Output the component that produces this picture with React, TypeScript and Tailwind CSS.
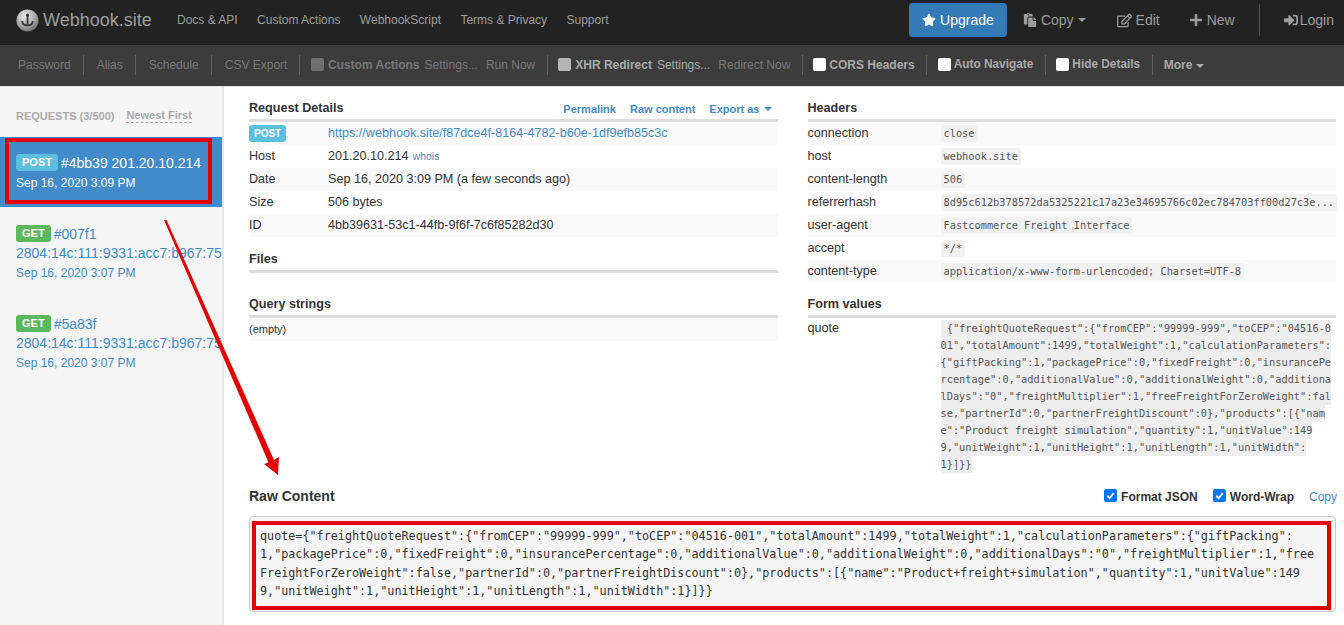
import React from 'react';
import { FaStar, FaPaste, FaRegEdit, FaPlus, FaSignInAlt } from 'react-icons/fa';

const sans = { fontFamily: '"Liberation Sans", Arial, sans-serif' };

const navLinks = ['Docs & API', 'Custom Actions', 'WebhookScript', 'Terms & Privacy', 'Support'];

const details = [
  { label: 'Host', value: '201.20.10.214', whois: true },
  { label: 'Date', value: 'Sep 16, 2020 3:09 PM (a few seconds ago)' },
  { label: 'Size', value: '506 bytes' },
  { label: 'ID', value: '4bb39631-53c1-44fb-9f6f-7c6f85282d30' },
];

const headers = [
  ['connection', 'close'],
  ['host', 'webhook.site'],
  ['content-length', '506'],
  ['referrerhash', '8d95c612b378572da5325221c17a23e34695766c02ec784703ff00d27c3e...'],
  ['user-agent', 'Fastcommerce Freight Interface'],
  ['accept', '*/*'],
  ['content-type', 'application/x-www-form-urlencoded; Charset=UTF-8'],
];

const formLines = [
  ' {"freightQuoteRequest":{"fromCEP":"99999-999","toCEP":"04516-0',
  '01","totalAmount":1499,"totalWeight":1,"calculationParameters":',
  '{"giftPacking":1,"packagePrice":0,"fixedFreight":0,"insurancePe',
  'rcentage":0,"additionalValue":0,"additionalWeight":0,"additiona',
  'lDays":"0","freightMultiplier":1,"freeFreightForZeroWeight":fal',
  'se,"partnerId":0,"partnerFreightDiscount":0},"products":[{"nam',
  'e":"Product freight simulation","quantity":1,"unitValue":149',
  '9,"unitWeight":1,"unitHeight":1,"unitLength":1,"unitWidth":',
  '1}]}}',
];

const rawLines = [
  'quote={"freightQuoteRequest":{"fromCEP":"99999-999","toCEP":"04516-001","totalAmount":1499,"totalWeight":1,"calculationParameters":{"giftPacking":',
  '1,"packagePrice":0,"fixedFreight":0,"insurancePercentage":0,"additionalValue":0,"additionalWeight":0,"additionalDays":"0","freightMultiplier":1,"free',
  'FreightForZeroWeight":false,"partnerId":0,"partnerFreightDiscount":0},"products":[{"name":"Product+freight+simulation","quantity":1,"unitValue":149',
  '9,"unitWeight":1,"unitHeight":1,"unitLength":1,"unitWidth":1}]}}',
];

const mono = "font-['DejaVu_Sans_Mono',monospace]";

function Caret() {
  return <span className="inline-block border-x-[4px] border-t-[4px] border-x-transparent border-t-current align-middle" />;
}

function Logo() {
  return (
    <svg width="23" height="23" viewBox="0 0 24 24" className="mr-[4px]">
      <defs>
        <radialGradient id="ball" cx="40%" cy="30%" r="75%">
          <stop offset="0%" stopColor="#ececec" />
          <stop offset="60%" stopColor="#a8a8a8" />
          <stop offset="100%" stopColor="#6a6a6a" />
        </radialGradient>
      </defs>
      <circle cx="12" cy="12" r="11.5" fill="url(#ball)" />
      <path d="M12 6v11M6.5 12.5c0 3.5 2.5 4.5 5.5 4.5s5.5-1 5.5-4.5" fill="none" stroke="#3a3a3a" strokeWidth="1.9" />
      <circle cx="12" cy="6.5" r="1.7" fill="#3a3a3a" />
    </svg>
  );
}

function Check({ disabled, bright }: { disabled?: boolean; bright?: boolean }) {
  return (
    <span
      className={`mb-[2px] inline-block size-[13px] rounded-[2px] ${
        disabled ? 'mr-1 bg-[#6e6e6e]' : bright ? 'mr-[3px] bg-white' : 'mr-1 bg-[#b5b5b5]'
      }`}
    />
  );
}

function BlueCheck() {
  return (
    <span className="mr-1 mb-[3px] flex size-[13px] items-center justify-center rounded-[2px] bg-[#0075ff]">
      <svg width="11" height="11" viewBox="0 0 12 12">
        <path d="M2.5 6.2l2.5 2.6 4.6-5.4" fill="none" stroke="#fff" strokeWidth="2" />
      </svg>
    </span>
  );
}

function SubItem({ first, plain, children }: { first?: boolean; plain?: boolean; children: React.ReactNode }) {
  return (
    <div
      className={`flex h-5 items-center ${plain ? 'pr-[12px] pl-[13px]' : 'pr-[11.5px] pl-[10.5px]'} ${
        first ? '' : 'border-l border-[#5e5e5e]'
      }`}
    >
      {children}
    </div>
  );
}

function SectionTitle({ children, right }: { children: React.ReactNode; right?: React.ReactNode }) {
  return (
    <div className="flex h-[25px] items-start justify-between border-b-[3px] border-[#dddddd] pt-[3px]">
      <h3 className="text-[12.6px] leading-[17px] font-bold text-[#333]">{children}</h3>
      {right}
    </div>
  );
}

function RequestItem({ id, time }: { id: string; time: string }) {
  return (
    <div className="h-[90px] w-[222px] overflow-hidden pt-[17px] pl-4 text-[#428bca]">
      <div className="flex h-[19px] items-center text-sm">
        <span className="mr-[3px] rounded-[3px] bg-[#5cb85c] px-[6px] py-[2px] text-[11px] leading-[13px] font-bold text-white">GET</span>
        {id}
      </div>
      <div className="text-sm leading-[20px] whitespace-nowrap">2804:14c:111:9331:acc7:b967:75c4:9f2e</div>
      <div className="text-xs leading-[20px]">{time}</div>
    </div>
  );
}

export default function App() {
  return (
    <div className="relative h-[625px] w-[1344px] overflow-hidden bg-white text-[#333]" style={sans}>
      <nav className="flex h-[45px] items-center bg-[#222] pb-[5px] text-xs text-[#9d9d9d]">
        <div className="ml-[16px] flex w-[161px] items-center text-[18px]">
          <Logo />
          Webhook.site
        </div>
        <div className="flex gap-[19.4px]">
          {navLinks.map((link) => (
            <span key={link}>{link}</span>
          ))}
        </div>
        <div className="ml-auto flex items-center pr-[10px] text-sm">
          <button className="mr-[16px] flex h-[34px] w-[98px] items-center justify-center gap-[4px] rounded bg-[#337ab7] text-white">
            <FaStar size={14} />
            Upgrade
          </button>
          <span className="mr-[31px] flex items-center gap-[4px]">
            <FaPaste size={14} />
            Copy
            <Caret />
          </span>
          <span className="mr-[29px] flex items-center gap-[4px]">
            <FaRegEdit size={15} />
            Edit
          </span>
          <span className="flex items-center gap-[4px]">
            <FaPlus size={14} />
            New
          </span>
          <span className="mx-[24px] h-[32px] w-px bg-[#555]" />
          <span className="flex items-center gap-[2px]">
            <FaSignInAlt size={14} />
            Login
          </span>
        </div>
      </nav>

      <div className="flex h-[42px] items-center border-b-[1px] border-[#e7e7e7] bg-[#3c3c3c] pb-[1px] pl-[5px] text-xs text-[#777]">
        <SubItem first plain>Password</SubItem>
        <SubItem plain>Alias</SubItem>
        <SubItem plain>Schedule</SubItem>
        <SubItem plain>CSV Export</SubItem>
        <SubItem>
          <Check disabled />
          <b className="mr-[5px]">Custom Actions</b>
          <span className="mr-2">Settings...</span>
          Run Now
        </SubItem>
        <SubItem>
          <Check />
          <b className="mr-[5px] text-[#aaa]">XHR Redirect</b>
          <span className="mr-2 text-[#aaa]">Settings...</span>
          Redirect Now
        </SubItem>
        <SubItem>
          <Check bright />
          <b className="text-[#aaa]">CORS Headers</b>
        </SubItem>
        <SubItem>
          <Check bright />
          <b className="text-[11.85px] text-[#aaa]">Auto Navigate</b>
        </SubItem>
        <SubItem>
          <Check bright />
          <b className="text-[11.85px] text-[#aaa]">Hide Details</b>
        </SubItem>
        <SubItem plain>
          <b className="-ml-[2px] text-[#aaa]">More</b>
          <span className="ml-1 text-[#aaa]">
            <Caret />
          </span>
        </SubItem>
      </div>

      <div className="flex">
        <aside className="h-[538px] w-[224px] shrink-0 border-r-2 border-[#e7e7e7] bg-[#f5f5f5]">
          <div className="flex h-[50px] items-center pt-[8px] pl-4 text-[11px] font-bold text-[#aaa]">
            <span className="mr-3">REQUESTS (3/500)</span>
            <span className="border-b border-dashed border-[#aaa] text-[11px] leading-[13px]">Newest First</span>
          </div>
          <div className="h-[70px] w-[222px] bg-[#428bca] pt-[16px] pl-4 text-white">
            <div className="flex h-[19px] items-center text-sm">
              <span className="mr-[3px] rounded-[3px] bg-[#5bc0de] px-[6px] py-[2px] text-[11px] leading-[13px] font-bold">POST</span>
              #4bb39 201.20.10.214
            </div>
            <div className="mt-[1px] text-xs leading-[20px]">Sep 16, 2020 3:09 PM</div>
          </div>
          <RequestItem id="#007f1" time="Sep 16, 2020 3:07 PM" />
          <RequestItem id="#5a83f" time="Sep 16, 2020 3:07 PM" />
        </aside>

        <main className="min-w-0 flex-1 pt-[10px] pr-[8px] pl-[25px] text-[12.6px]">
          <div className="grid h-[389px] grid-cols-2 gap-[30px]">
            <section>
              <SectionTitle
                right={
                  <div className="flex gap-[14px] pt-[1px] text-[11px] font-bold text-[#428bca]">
                    <span>Permalink</span>
                    <span>Raw content</span>
                    <span className="mr-[6px] flex items-center gap-1">
                      Export as
                      <Caret />
                    </span>
                  </div>
                }
              >
                Request Details
              </SectionTitle>
              <div className="flex h-[23px] items-center bg-[#f9f9f9]">
                <span className="w-[79px]">
                  <span className="rounded-[3px] bg-[#5bc0de] px-[5px] py-[3px] text-[10px] font-bold text-white">POST</span>
                </span>
                <span className="text-[#428bca]">https://webhook.site/f87dce4f-8164-4782-b60e-1df9efb85c3c</span>
              </div>
              {details.map((row, i) => (
                <div key={row.label} className={`flex h-[23px] items-center pb-[1px] ${i % 2 === 1 ? 'bg-[#f9f9f9]' : ''}`}>
                  <span className="w-[79px]">{row.label}</span>
                  <span>
                    {row.value}
                    {row.whois && <span className="ml-1 text-[10.5px] text-[#428bca]">whois</span>}
                  </span>
                </div>
              ))}

              <div className="mt-[11px]">
                <SectionTitle>Files</SectionTitle>
              </div>
              <div className="mt-[20px]">
                <SectionTitle>Query strings</SectionTitle>
              </div>
              <div className="flex h-[23px] items-center bg-[#f9f9f9] text-[11px]">(empty)</div>
            </section>

            <section>
              <SectionTitle>Headers</SectionTitle>
              {headers.map(([name, value], i) => (
                <div key={name} className={`flex h-[23px] items-center ${i % 2 === 0 ? 'bg-[#f9f9f9]' : ''}`}>
                  <span className="w-[133px] shrink-0 pb-[1px]">{name}</span>
                  <code className={`${mono} rounded-[3px] bg-[#f1f1f1] px-[3px] py-[2px] text-[10.3px] leading-[13px] whitespace-pre text-[#555]`}>
                    {value}
                  </code>
                </div>
              ))}

              <div className="mt-[10px]">
                <SectionTitle>Form values</SectionTitle>
              </div>
              <div className="flex pt-[2px]">
                <span className="w-[133px] shrink-0 leading-[17px]">quote</span>
                <code className={`${mono} text-[10.3px] leading-[17px] text-[#555]`}>
                  {formLines.map((line) => (
                    <div key={line} className="w-fit bg-[#eeeeee] whitespace-pre">
                      {line}
                    </div>
                  ))}
                </code>
              </div>
            </section>
          </div>

          <div className="flex h-[30px] items-start justify-between">
            <h3 className="text-sm leading-[20px] font-bold">Raw Content</h3>
            <div className="-mr-px flex items-center pt-[3px] text-xs font-bold">
              <BlueCheck />
              <span className="mr-[15px]">Format JSON</span>
              <BlueCheck />
              <span className="mr-[15px]">Word-Wrap</span>
              <span className="font-normal text-[#428bca]">Copy</span>
            </div>
          </div>
          <div className="h-[96px] rounded border border-[#cccccc] bg-[#f5f5f5] px-[10px] pt-[10px]">
            <pre className={`${mono} text-[11.75px] leading-[18.3px] text-[#333]`}>{rawLines.join('\n')}</pre>
          </div>
        </main>
      </div>

      {/* red annotations drawn over the screenshot */}
      <div className="pointer-events-none absolute top-[138px] left-[5px] h-[66px] w-[207px] border-[4px] border-[#e30000]" />
      <div className="pointer-events-none absolute top-[521px] left-[252px] h-[89px] w-[1079px] border-[4px] border-[#e30000]" />
      <svg className="pointer-events-none absolute top-0 left-0" width="1344" height="625">
        <path d="M164 220L166.5 220L274 460L279 457L278 475L264 464L268.5 462.5Z" fill="#e30000" />
      </svg>
    </div>
  );
}
